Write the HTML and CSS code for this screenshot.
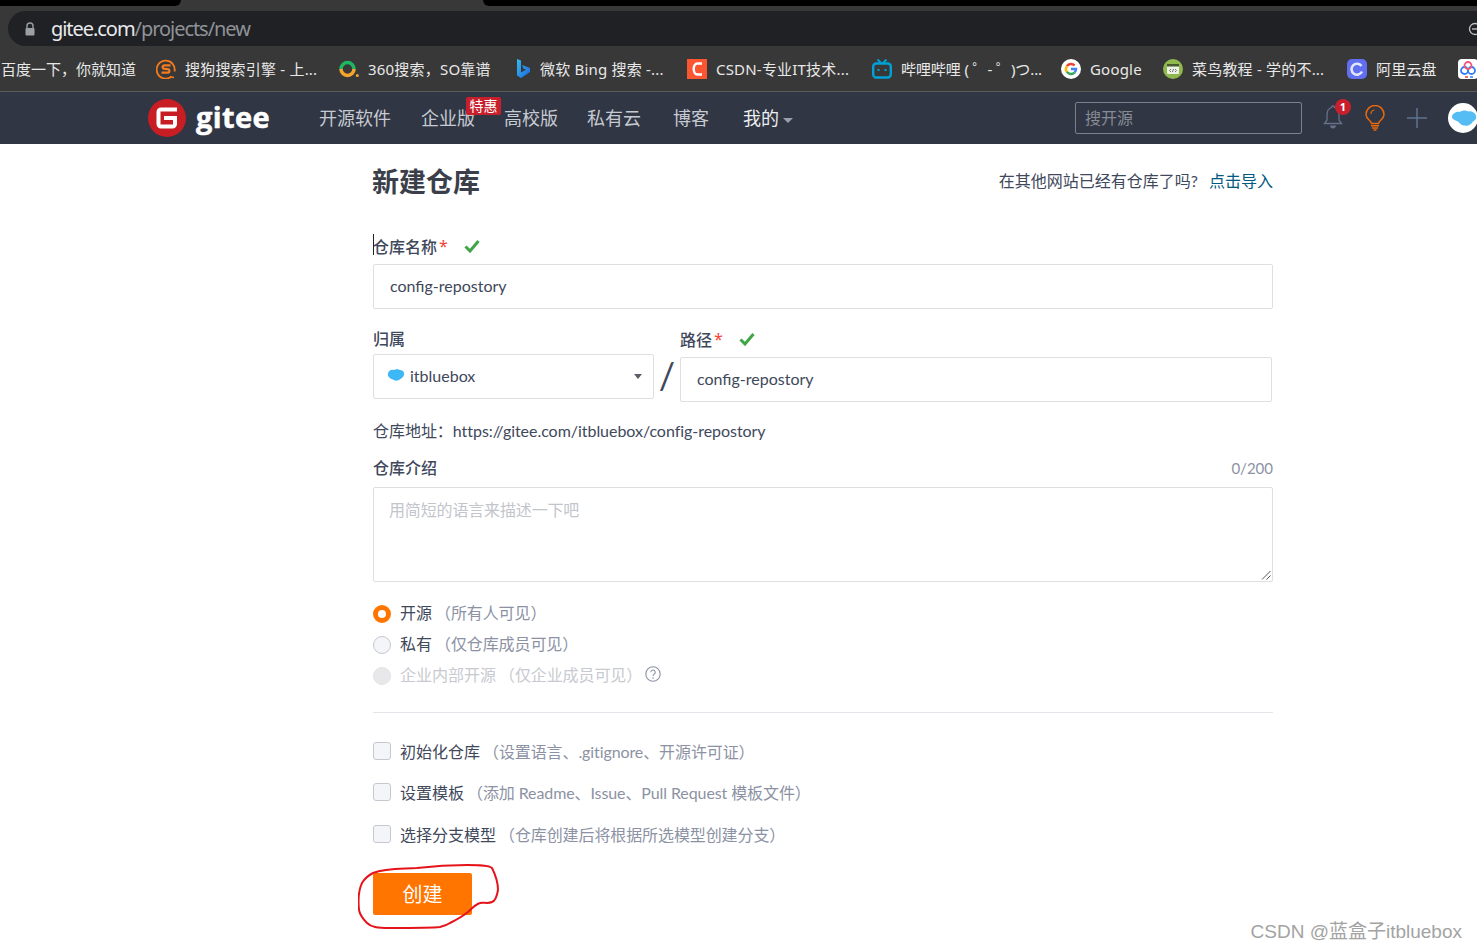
FILE: index.html
```html
<!DOCTYPE html>
<html lang="zh-CN">
<head>
<meta charset="UTF-8">
<title>新建仓库 - Gitee</title>
<link rel="stylesheet" href="styles.css">
</head>
<body>

<div class="browser-top">
    <div class="tab-strip">
        <div class="tab-black tab-black-left"></div>
        <div class="tab-black tab-black-right"></div>
    </div>
    <div class="address-row">
        <div class="address-bar">
            <svg class="lock" viewBox="0 0 12 14" width="12" height="14"><path d="M3 6V4a3 3 0 0 1 6 0v2" fill="none" stroke="#9aa0a6" stroke-width="1.4"/><rect x="1.5" y="6" width="9" height="7.5" rx="1" fill="#9aa0a6"/></svg>
            <span class="url-host">gitee.com</span><span class="url-path">/projects/new</span>
            <svg class="zoom-icon" viewBox="0 0 14 14" width="14" height="14"><circle cx="7" cy="7" r="5.5" fill="none" stroke="#c4c7cb" stroke-width="1.3"/><path d="M4 7h6" stroke="#c4c7cb" stroke-width="1.3"/></svg>
        </div>
    </div>
    <div class="bookmarks">
        <div class="bm bm-baidu">百度一下，你就知道</div>
        <div class="bm bm-sogou">
            <svg viewBox="0 0 20 20" width="20" height="20"><path d="M15.500 17.500A9 9 0 1 1 18.500 12.500" fill="none" stroke="#f47a20" stroke-width="1.800"/><path d="M14.500 6.300H8.500C6 6.300 6 9.700 8.500 9.900L11.500 10.100C14 10.300 14 13.700 11.500 13.700H5.500" fill="none" stroke="#f47a20" stroke-width="2.200"/><path d="M15 18l3 .5" stroke="#f47a20" stroke-width="1.500"/></svg>
            搜狗搜索引擎 - 上...
        </div>
        <div class="bm bm-360">
            <svg viewBox="0 0 20 20" width="20" height="20"><path d="M2 10a6.500 6.500 0 0 1 13 0" fill="none" stroke="#1db761" stroke-width="3.500"/><path d="M15 10a6.500 6.500 0 0 1-13 0" fill="none" stroke="#f7a42c" stroke-width="3.500"/><circle cx="18.300" cy="16.500" r="1.500" fill="#f7a42c"/></svg>
            360搜索，SO靠谱
        </div>
        <div class="bm bm-bing">
            <svg viewBox="0 0 16 20" width="16" height="20"><defs><linearGradient id="bing-fill" x1="0" y1="0" x2="1" y2="1"><stop offset="0" stop-color="#37bdf0"/><stop offset="1" stop-color="#1a66e0"/></linearGradient></defs><path d="M2 0l4 1.500v12l5-2.800-2.300-1L7 6l8 3v4l-9 6-4-2.500z" fill="url(#bing-fill)"/></svg>
            微软 Bing 搜索 -...
        </div>
        <div class="bm bm-csdn">
            <svg viewBox="0 0 20 20" width="20" height="20"><rect width="20" height="20" fill="#fc5531"/><path d="M15 4.500H10.500C5.500 4.500 5.500 15.500 10.500 15.500H15" fill="none" stroke="#fff" stroke-width="2.400"/></svg>
            CSDN-专业IT技术...
        </div>
        <div class="bm bm-bili">
            <svg viewBox="0 0 20 20" width="20" height="20"><rect x="1.200" y="4.500" width="17.600" height="14" rx="3" fill="none" stroke="#00a1d6" stroke-width="2.400"/><path d="M5.500 .5l3.500 3.500M14.500 .5L11 4" stroke="#00a1d6" stroke-width="2"/><path d="M6.500 10v2M13.500 10v2" stroke="#00a1d6" stroke-width="2"/></svg>
            哔哩哔哩 ( ゜- ゜)つ...
        </div>
        <div class="bm bm-google">
            <svg viewBox="0 0 20 20" width="20" height="20"><circle cx="10" cy="10" r="10" fill="#fff"/><g fill="none" stroke-width="2.500"><path d="M5.900 7.100A5 5 0 0 1 13.600 6.500" stroke="#ea4335"/><path d="M5.900 7.100A5 5 0 0 0 5.900 12.900" stroke="#fbbc05"/><path d="M5.900 12.900A5 5 0 0 0 13.600 13.500" stroke="#34a853"/><path d="M13.600 13.500A5 5 0 0 0 15 10H10" stroke="#4285f4"/></g></svg>
            Google
        </div>
        <div class="bm bm-runoob">
            <svg viewBox="0 0 20 20" width="20" height="20"><circle cx="10" cy="10" r="10" fill="#8fb84f"/><rect x="4" y="5" width="12" height="10" rx="1" fill="#eef2e4"/><rect x="4" y="5" width="12" height="2.500" fill="#47592f"/><path d="M8 10l-1.500 1.500L8 13M12 10l1.500 1.500L12 13M10.600 10l-1.200 3" fill="none" stroke="#555" stroke-width=".8"/></svg>
            菜鸟教程 - 学的不...
        </div>
        <div class="bm bm-aliyun">
            <svg viewBox="0 0 20 20" width="20" height="20"><rect width="20" height="20" rx="5" fill="#626ef0"/><path d="M15 12.500A5.500 5.500 0 1 1 14.500 7" fill="none" stroke="#dfe6ff" stroke-width="2.600"/></svg>
            阿里云盘
        </div>
        <div class="bm bm-last">
            <svg viewBox="0 0 20 20" width="20" height="20"><rect width="20" height="20" rx="4" fill="#fff"/><circle cx="6.500" cy="11.500" r="3.500" fill="none" stroke="#2f7cf6" stroke-width="1.800"/><circle cx="13.500" cy="11.500" r="3.500" fill="none" stroke="#2f7cf6" stroke-width="1.800"/><circle cx="10" cy="6.500" r="3.500" fill="none" stroke="#f0567a" stroke-width="1.800"/><path d="M7 18h3" stroke="#e94040" stroke-width="1.500"/><path d="M12 18h3" stroke="#2f7cf6" stroke-width="1.500"/></svg>
        </div>
    </div>
</div>

<nav class="site-nav">
    <svg class="logo-mark" viewBox="0 0 38 38" width="38" height="38"><circle cx="19" cy="19" r="19" fill="#c71d23"/><path d="M29 8.500H13c-2.500 0-4.500 2-4.500 4.500v12c0 2.500 2 4.500 4.500 4.500h11.500c2.500 0 4.500-2 4.500-4.500v-8H16v4h9v4.500H12.500V12.500H29z" fill="#fff"/></svg>
    <span class="logo-text">gitee</span>
    <a class="nav-link nav-open">开源软件</a>
    <a class="nav-link nav-ent">企业版<span class="nav-badge">特惠</span></a>
    <a class="nav-link nav-edu">高校版</a>
    <a class="nav-link nav-cloud">私有云</a>
    <a class="nav-link nav-blog">博客</a>
    <a class="nav-link nav-mine">我的<i class="caret"></i></a>
    <div class="nav-search">搜开源</div>
    <div class="nav-bell">
        <svg viewBox="0 0 20 26" width="20" height="26"><path d="M10 1a1.500 1.500 0 0 1 1.500 1.500C15 3.500 16 6.500 16 10v5l2.500 3.500h-17L4 15v-5c0-3.500 1-6.500 4.500-7.500A1.500 1.500 0 0 1 10 1z" fill="none" stroke="#66728a" stroke-width="1.300"/><path d="M7 20.500h6c0 2-1.500 3-3 3s-3-1-3-3z" fill="#66728a"/></svg>
        <span class="bell-count">1</span>
    </div>
    <svg class="nav-bulb" viewBox="0 0 20 26" width="20" height="26"><path d="M6.500 18.500c0-3-5.500-4-5.500-9a9 9 0 0 1 18 0c0 5-5.500 6-5.500 9z" fill="none" stroke="#e8690b" stroke-width="1.500"/><path d="M6 20.800h8M7 23h6M8.500 25h3" stroke="#e8690b" stroke-width="1.400"/><path d="M6 9A4 4 0 0 1 9.500 5" fill="none" stroke="#e8690b" stroke-width="1.200"/></svg>
    <svg class="nav-plus" viewBox="0 0 20 20" width="20" height="20"><path d="M10 0v20M0 10h20" stroke="#5f7390" stroke-width="1.500"/></svg>
    <div class="nav-avatar">
        <svg viewBox="0 0 30 30" width="30" height="30"><circle cx="15" cy="15" r="15" fill="#fff"/><path d="M4 13c1-3 5-5 8-4 2-2 6-2 8-.5 3-1 7 1 8 4 1 3-1 5-3 6-2 3-5 5-8 4-3 .5-5-2-7-4-3-1-7-3-6-5.500z" fill="#55bdf4"/></svg>
    </div>
</nav>

<main class="form-page">
    <div class="page-head">
        <h1>新建仓库</h1>
        <div class="import-tip">在其他网站已经有仓库了吗?<a>点击导入</a></div>
    </div>

    <div class="field-name">
        <label class="field-label"><span class="text-cursor"></span>仓库名称<em>*</em><svg class="ok" viewBox="0 0 16 14" width="16" height="14"><path d="M1.500 7.500l4.500 4.500L14.500 2" fill="none" stroke="#3fa648" stroke-width="3"/></svg></label>
        <div class="text-box">config-repostory</div>
    </div>

    <div class="owner-row">
        <div class="owner-col">
            <label class="field-label">归属</label>
            <div class="text-box select-box">
                <svg viewBox="0 0 18 14" width="18" height="14"><path d="M1 5c1-3 4-4 6-3 1-1 5-1 6 0 3 0 5 3 4 5-1 3-4 4-5 5-2 1-4 1-5 0-3-1-7-3-6-7z" fill="#3db8f5"/></svg>
                <span>itbluebox</span>
                <i class="select-caret"></i>
            </div>
        </div>
        <div class="slash">/</div>
        <div class="path-col">
            <label class="field-label">路径<em>*</em><svg class="ok" viewBox="0 0 16 14" width="16" height="14"><path d="M1.500 7.500l4.500 4.500L14.500 2" fill="none" stroke="#3fa648" stroke-width="3"/></svg></label>
            <div class="text-box path-box">config-repostory</div>
        </div>
    </div>

    <div class="repo-url">仓库地址：https://gitee.com/itbluebox/config-repostory</div>

    <div class="desc-head">
        <label class="field-label">仓库介绍</label>
        <span class="counter">0/200</span>
    </div>
    <div class="text-box desc-box">
        用简短的语言来描述一下吧
        <svg class="resize-grip" viewBox="0 0 10 10" width="10" height="10"><path d="M9.500 1L1 9.500M9.500 5.500L5.500 9.500" stroke="#555" stroke-width="1"/></svg>
    </div>

    <div class="radios">
        <div class="radio-row"><i class="radio radio-on"></i><span class="opt">开源</span><span class="hint">（所有人可见）</span></div>
        <div class="radio-row"><i class="radio"></i><span class="opt">私有</span><span class="hint">（仅仓库成员可见）</span></div>
        <div class="radio-row radio-disabled"><i class="radio"></i><span class="opt">企业内部开源</span><span class="hint">（仅企业成员可见）</span>
            <svg class="help" viewBox="0 0 16 16" width="16" height="16"><circle cx="8" cy="8" r="7.200" fill="none" stroke="#8c92a4" stroke-width="1.100"/><path d="M5.800 6.300a2.200 2.200 0 1 1 3.400 1.800C8.400 8.700 8 9 8 10" fill="none" stroke="#8c92a4" stroke-width="1.100"/><circle cx="8" cy="12" r=".8" fill="#8c92a4"/></svg>
        </div>
    </div>

    <div class="divider"></div>

    <div class="checks">
        <div class="check-row"><i class="check"></i><span class="opt">初始化仓库</span><span class="hint">（设置语言、.gitignore、开源许可证）</span></div>
        <div class="check-row"><i class="check"></i><span class="opt">设置模板</span><span class="hint">（添加 Readme、Issue、Pull Request 模板文件）</span></div>
        <div class="check-row"><i class="check"></i><span class="opt">选择分支模型</span><span class="hint">（仓库创建后将根据所选模型创建分支）</span></div>
    </div>

    <button class="create-btn">创建</button>
</main>

<svg class="red-circle" viewBox="0 0 142 68" width="142" height="68"><path d="M15 10C28 5 42 6 59 5 76 3 95 2 109 2c11 0 22 0 25 3 3 6 6 14 6 22-1 6-3 11-6 12-4 2-9 0-12 1-4 1-8 5-12 9-5 4-12 8-18 11-3 2-6 3-10 4-8 1-28 1-50 1C19 65 13 64 9 60 5 56 2 52 1 47 0 37 0 28 4 20 7 15 11 12 15 10z" fill="none" stroke="#e5141b" stroke-width="2"/></svg>
<div class="watermark">CSDN @蓝盒子itbluebox</div>

</body>
</html>
```

FILE: styles.css
```css
* {
    box-sizing: border-box;
}

html, body {
    margin: 0;
    padding: 0;
    height: 950px;
    overflow: hidden;
}

body {
    position: relative;
    background: #fff;
    color: #40485b;
    font-family: "Noto Sans", "Noto Sans CJK SC", sans-serif;
    font-size: 15px;
}

/* browser chrome */
.browser-top {
    background: #383838;
    height: 92px;
    border-bottom: 1px solid #5c5c5c;
}

.tab-strip {
    display: flex;
    justify-content: space-between;
    height: 11px;
}

.tab-black {
    height: 6px;
    background: #000;
}

.tab-black-left {
    width: 181px;
    border-bottom-right-radius: 6px;
}

.tab-black-right {
    width: 994px;
    border-bottom-left-radius: 6px;
}

.address-row {
    height: 35px;
    padding-left: 8px;
}

.address-bar {
    display: flex;
    align-items: center;
    height: 35px;
    background: #202124;
    border-radius: 18px 0 0 18px;
    padding-left: 16px;
    font-size: 20px;
    letter-spacing: -1.05px;
}

.lock {
    margin-right: 15px;
}

.url-host {
    color: #e8eaed;
}

.url-path {
    color: #8f9297;
}

.zoom-icon {
    margin-left: auto;
    margin-right: -5px;
}

.bookmarks {
    display: flex;
    align-items: center;
    height: 45px;
    overflow: hidden;
    white-space: nowrap;
    color: #e8e8e8;
    font-size: 15px;
}

.bm {
    display: flex;
    align-items: center;
    flex: none;
    gap: 9px;
    letter-spacing: 0.2px;
}

.bm-baidu { width: 156px; padding-left: 1px; letter-spacing: 0; }
.bm-sogou { width: 183px; }
.bm-360 { width: 176px; }
.bm-bing { width: 172px; }
.bm-csdn { width: 185px; }
.bm-bili { width: 189px; letter-spacing: -0.1px; }
.bm-google { width: 102px; }
.bm-runoob { width: 184px; }
.bm-aliyun { width: 111px; }

/* site nav */
.site-nav {
    display: flex;
    align-items: center;
    height: 52px;
    background: #303643;
    padding-left: 148px;
    white-space: nowrap;
    overflow: hidden;
}

.logo-mark {
    flex: none;
}

.logo-text {
    flex: none;
    margin-left: 10px;
    width: 123px;
    padding-bottom: 3px;
    font-family: "Open Sans", sans-serif;
    font-weight: 700;
    font-size: 29px;
    letter-spacing: 0.4px;
    -webkit-text-stroke: 0.5px #fff;
    color: #fff;
    line-height: 40px;
}

.nav-link {
    position: relative;
    flex: none;
    padding-bottom: 2px;
    font-size: 18px;
    color: #c6cad2;
}

.nav-open { margin-right: 30px; }
.nav-ent { margin-right: 29px; }
.nav-edu { margin-right: 29px; }
.nav-cloud { margin-right: 32px; }
.nav-blog { margin-right: 34px; }
.nav-mine { color: #eceef2; width: 332px; }

.nav-badge {
    position: absolute;
    left: 45px;
    top: -7px;
    width: 35px;
    height: 18px;
    background: #c7202c;
    border-radius: 2px;
    color: #fff;
    font-size: 14px;
    line-height: 18px;
    text-align: center;
}

.caret {
    display: inline-block;
    margin-left: 4px;
    vertical-align: 2px;
    border-top: 5px solid #9a9ea8;
    border-left: 5px solid transparent;
    border-right: 5px solid transparent;
}

.nav-search {
    flex: none;
    width: 227px;
    height: 32px;
    border: 1px solid #7b808b;
    border-radius: 2px;
    padding-left: 9px;
    color: #878b95;
    font-size: 16px;
    line-height: 30px;
}

.nav-bell {
    position: relative;
    flex: none;
    width: 20px;
    height: 26px;
    margin-left: 21px;
}

.nav-bell svg {
    display: block;
}

.bell-count {
    position: absolute;
    left: 12px;
    top: -6px;
    width: 16px;
    height: 16px;
    border-radius: 50%;
    background: #c7202c;
    color: #fff;
    font-size: 11px;
    font-weight: 700;
    line-height: 16px;
    text-align: center;
}

.nav-bulb {
    flex: none;
    margin-left: 22px;
}

.nav-plus {
    flex: none;
    margin-left: 22px;
}

.nav-avatar {
    flex: none;
    width: 30px;
    height: 30px;
    margin-left: 21px;
}

/* form */
.form-page {
    width: 900px;
    margin-left: 373px;
    font-family: Lato, "Noto Sans CJK SC", sans-serif;
    font-size: 16px;
}

.page-head {
    display: flex;
    align-items: center;
    justify-content: space-between;
    height: 38px;
    margin-top: 17px;
}

.page-head h1 {
    margin: 0 0 0 -1px;
    font-size: 27px;
    font-weight: 700;
    color: #3b3f4a;
}

.import-tip {
    color: #40485b;
}

.import-tip a {
    margin-left: 11px;
    color: #005980;
}

.field-name {
    margin-top: 35px;
}

.field-label {
    display: flex;
    align-items: center;
    position: relative;
    height: 24px;
    font-size: 16px;
    font-weight: 500;
    color: #40485b;
}

.field-label em {
    margin-left: 2px;
    font-family: "Noto Sans", sans-serif;
    color: #f44336;
    font-style: normal;
    font-weight: 400;
}

.ok {
    margin-left: 16px;
}

.text-cursor {
    position: absolute;
    left: 0;
    top: 0;
    width: 1px;
    height: 21px;
    background: #222;
}

.text-box {
    height: 45px;
    margin-top: 6px;
    border: 1px solid #dedee3;
    border-radius: 2px;
    padding: 0 16px;
    line-height: 41px;
    font-size: 16px;
    color: #40485b;
    background: #fff;
}

.owner-row {
    display: flex;
    margin-top: 17px;
}

.owner-col {
    width: 281px;
    flex: none;
}

.owner-col .text-box {
    margin-top: 4px;
}

.select-box {
    display: flex;
    align-items: center;
    gap: 5px;
    padding-left: 13px;
    padding-bottom: 3px;
}

.select-caret {
    margin-left: auto;
    margin-right: -5px;
    margin-top: 3px;
    border-top: 5px solid #5a5e66;
    border-left: 4px solid transparent;
    border-right: 4px solid transparent;
}

.slash {
    width: 26px;
    flex: none;
    padding-top: 27px;
    text-align: center;
    font-size: 36px;
    line-height: 44px;
    font-weight: 400;
    color: #40485b;
}

.path-col {
    width: 592px;
    flex: none;
    padding-top: 1px;
}

.path-col .text-box {
    margin-top: 6px;
}

.repo-url {
    margin-top: 18px;
    height: 22px;
    line-height: 22px;
    letter-spacing: -0.04px;
}

.desc-head {
    display: flex;
    align-items: center;
    justify-content: space-between;
    margin-top: 13px;
}

.counter {
    margin-top: 1px;
    font-size: 15px;
    color: #8c92a4;
}

.desc-box {
    position: relative;
    height: 95px;
    margin-top: 8px;
    padding-left: 15px;
    line-height: 44px;
    letter-spacing: -0.15px;
    color: #c2c5cc;
}

.resize-grip {
    position: absolute;
    right: 1px;
    bottom: 1px;
}

.radios {
    margin-top: 14px;
}

.radio-row {
    display: flex;
    align-items: center;
    height: 31px;
}

.radio {
    flex: none;
    width: 18px;
    height: 18px;
    margin-top: 4px;
    border: 1px solid #c5c8d0;
    border-radius: 50%;
    background: #f4f5f8;
    margin-right: 9px;
}

.radio-on {
    border: 5px solid #ff7500;
    background: #fff;
}

.opt {
    color: #40485b;
}

.hint {
    margin-left: 3px;
    letter-spacing: -0.1px;
    color: #8c92a4;
}

.radio-disabled .radio {
    background: #e8e8ea;
    border-color: #e3e3e6;
}

.radio-disabled .opt,
.radio-disabled .hint {
    color: #c8cad0;
}

.help {
    margin-left: 3px;
    margin-top: 0;
}

.divider {
    height: 1px;
    background: #e3e5eb;
    margin-top: 23px;
}

.checks {
    margin-top: 17px;
}

.check-row {
    display: flex;
    align-items: center;
    height: 41.500px;
}

.check {
    flex: none;
    width: 18px;
    height: 18px;
    margin-right: 9px;
    border: 1px solid #c5c8d0;
    border-radius: 3px;
    background: #f4f5f8;
}

.create-btn {
    display: block;
    width: 99px;
    height: 42px;
    margin-top: 18px;
    border: none;
    border-radius: 2px;
    background: #ff7500;
    color: #fff;
    font-family: inherit;
    font-size: 20px;
}

/* hand drawn ring and watermark lie over the page */
.red-circle {
    position: absolute;
    left: 358px;
    top: 863px;
}

.watermark {
    position: absolute;
    right: 15px;
    top: 916px;
    font-family: "Liberation Sans", "Noto Sans CJK SC", sans-serif;
    font-size: 19px;
    color: #a3a3a3;
}
```
